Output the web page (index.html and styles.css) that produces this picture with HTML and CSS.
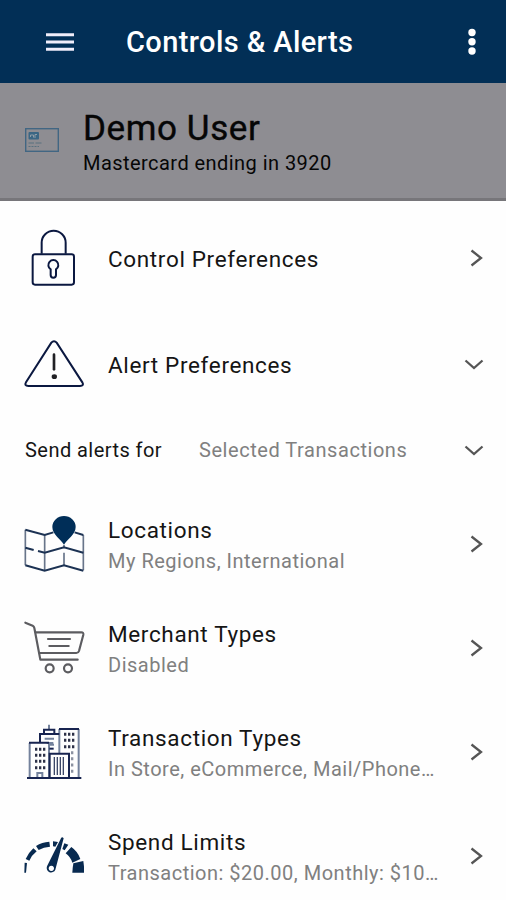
FILE: index.html
```
<!DOCTYPE html>
<html lang="en">
<head>
  <meta charset="utf-8">
  <title>Controls &amp; Alerts</title>
  <link rel="stylesheet" href="styles.css">
</head>
<body>

  <header class="topbar">
    <svg class="menu-icon" viewBox="0 0 28 18">
      <path d="M0 1.7h28M0 9h28M0 16.3h28"/>
    </svg>
    <h1>Controls &amp; Alerts</h1>
    <svg class="more-icon" viewBox="0 0 8 28">
      <circle cx="4" cy="4.5" r="3.7"/>
      <circle cx="4" cy="13.7" r="3.7"/>
      <circle cx="4" cy="23" r="3.7"/>
    </svg>
  </header>

  <section class="card-bar">
    <svg class="card-icon" viewBox="0 0 34 24">
      <rect class="card-edge" x=".7" y=".7" width="32.6" height="22.6"/>
      <rect class="card-chip" x="3.5" y="4" width="10.5" height="7.5" rx="1"/>
      <path class="card-mark" d="M5.5 9V7h3v2.500M10 10V6.500h2"/>
      <path class="card-lines" d="M3.500 15h5.500m1.500 0h6M3.500 18.500h2m1 0h2m1 0h2m1 0h1.500"/>
    </svg>
    <div>
      <h2>Demo User</h2>
      <p class="card-number">Mastercard ending in 3920</p>
    </div>
  </section>

  <main>
    <div class="row row-first">
      <svg class="icon lock" viewBox="36 33 192 192">
        <path d="M95 116V83a36 36 0 0 1 72 0v33"/>
        <rect x="68" y="118" width="124" height="91" rx="7"/>
        <path d="M122 163a15 15 0 1 1 16 0v17a8 8 0 0 1-16 0z"/>
      </svg>
      <div class="text"><p class="title">Control Preferences</p></div>
      <svg class="arrow" viewBox="0 0 20 20"><path d="M5.500 2.500 15 10l-9.500 7.500"/></svg>
    </div>

    <div class="row row-alerts">
      <svg class="icon alert" viewBox="36 21 192 192">
        <path d="M124 53q8-9 16 0l77 119q6 11-7 11H55q-13 0-7-11z"/>
        <path class="bang" d="M132 89v44"/>
        <ellipse class="dot" cx="133" cy="155" rx="8" ry="7"/>
      </svg>
      <div class="text"><p class="title">Alert Preferences</p></div>
      <svg class="arrow down" viewBox="0 0 20 20"><path d="M1.500 6.500 10 14l8.500-7.500"/></svg>
    </div>

    <div class="row row-send">
      <label class="send-label">Send alerts for</label>
      <span class="send-value">Selected Transactions</span>
      <svg class="arrow down" viewBox="0 0 20 20"><path d="M1.500 6.500 10 14l8.500-7.500"/></svg>
    </div>

    <div class="row">
      <svg class="icon map" viewBox="36 21 192 192">
        <path class="fold" d="M46 74v107M104 90v106M220 90v106M162 120v10M162 143v37"/>
        <path class="fold-edge" d="M46 74l58 16 26-8M194 82l26 8M46 181l58 16 58-16 58 16"/>
        <path class="route" d="M46 128l25 7M84 138l20 5 58-16 58 16"/>
        <path class="pin" d="M162 119c-9-15-35-31-35-53a35 33 0 0 1 70 0c0 22-26 38-35 53z"/>
      </svg>
      <div class="text">
        <p class="title">Locations</p>
        <p class="detail">My Regions, International</p>
      </div>
      <svg class="arrow" viewBox="0 0 20 20"><path d="M5.500 2.500 15 10l-9.500 7.500"/></svg>
    </div>

    <div class="row">
      <svg class="icon cart" viewBox="36 18 192 192">
        <path d="M46 38l22 9q4 2 5 7l18 95h112"/>
        <path d="M77 67h137q7 0 6 7l-13 49q-2 6-8 6H89"/>
        <path d="M114 87h66M118 108h58"/>
        <circle cx="119" cy="175" r="12"/>
        <circle cx="174" cy="175" r="12"/>
      </svg>
      <div class="text">
        <p class="title">Merchant Types</p>
        <p class="detail">Disabled</p>
      </div>
      <svg class="arrow" viewBox="0 0 20 20"><path d="M5.500 2.500 15 10l-9.500 7.500"/></svg>
    </div>

    <div class="row">
      <svg class="icon city" viewBox="36 15 192 192">
        <path class="wall" d="M59 84v103M117 84v103M148 42v72M206 42v145"/>
        <path class="wall" d="M117 29v14M104 71h28M110 84h20M118 89h14M82 187v-13h15v13"/>
        <path class="roof" d="M51 189h163M57 83h60M90 83V57h58M102 56V44h31v12M147 42h60M119 187v-71h58v71"/>
        <path class="roof" d="M118 101h13"/>
        <path class="slats" d="M133 126v54M142 126v54M151 126v54M160 126v54"/>
        <path class="windows" d="M75 103h31M75 121h31M75 139h31M75 158h31"/>
        <path class="windows" d="M162 58h31M162 76h31M162 95h31"/>
        <path class="windows side" d="M183 113h8M183 131h8M183 150h8M183 169h8"/>
      </svg>
      <div class="text">
        <p class="title">Transaction Types</p>
        <p class="detail">In Store, eCommerce, Mail/Phone…</p>
      </div>
      <svg class="arrow" viewBox="0 0 20 20"><path d="M5.500 2.500 15 10l-9.500 7.500"/></svg>
    </div>

    <div class="row">
      <svg class="icon gauge" viewBox="36 12 192 192">
        <path d="M43 158l1-30 7 1-3 29z"/>
        <path d="M47 117q7-17 23-32l10 9q-15 12-22 28z"/>
        <path d="M78 78q18-12 40-13l2 15q-19 1-34 10z"/>
        <path d="M129 64l15 2-8 14-7-1zM163 70l12 4-11 17-7-4z"/>
        <path d="M184 81q20 14 27 36l-24 11q-5-17-20-28z"/>
        <path d="M190 130l30-7q3 14 2 35h-35q1-15 3-28z"/>
        <path fill-rule="evenodd" d="M153 55q3-7 8 0l-25 94a13 13 0 1 1-25-10zM124 137a8 8 0 1 0 .1 0z"/>
      </svg>
      <div class="text">
        <p class="title">Spend Limits</p>
        <p class="detail">Transaction: $20.00, Monthly: $10…</p>
      </div>
      <svg class="arrow" viewBox="0 0 20 20"><path d="M5.500 2.500 15 10l-9.500 7.500"/></svg>
    </div>
  </main>

</body>
</html>
```
FILE: styles.css
```
body {
  margin: 0;
  height: 900px;
  overflow: hidden;
  background-color: #fefefe;
  font-family: Roboto, "Liberation Sans", sans-serif;
  color: #151515;
}
h1, h2, p {
  margin: 0;
}
svg {
  display: block;
  flex: none;
  fill: none;
}

/* top bar */
.topbar {
  display: flex;
  align-items: center;
  box-sizing: border-box;
  height: 83px;
  padding: 0 30px 0 46px;
  background-color: #022f56;
  color: #fff;
}
.topbar h1 {
  flex: 1;
  margin-left: 52px;
  font-size: 29px;
  line-height: 34px;
  font-weight: 500;
  letter-spacing: 0.4px;
  padding-top: 1px;
}
.menu-icon {
  width: 28px;
  height: 18px;
  stroke: #f0edfa;
  stroke-width: 3;
}
.more-icon {
  width: 8px;
  height: 28px;
  fill: #fff;
}

/* selected card */
.card-bar {
  display: flex;
  box-sizing: border-box;
  height: 118px;
  padding: 26px 0 0 25px;
  background-color: #8e8d92;
  border-bottom: 3px solid #77767a;
  color: #060606;
}
.card-icon {
  width: 34px;
  height: 24px;
  margin: 19px 24px 0 0;
}
.card-edge {
  stroke: #416683;
  stroke-width: 1.4;
}
.card-chip {
  fill: #3a6684;
}
.card-mark {
  stroke: #8e9ca6;
}
.card-lines {
  stroke: #59707f;
}
.card-bar h2 {
  font-size: 35px;
  line-height: 40px;
  font-weight: 400;
  letter-spacing: 0.6px;
  -webkit-text-stroke: 0.4px #060606;
}
.card-number {
  font-size: 20px;
  line-height: 24px;
  margin-top: 2px;
  letter-spacing: 0.45px;
}

/* list rows */
.row {
  display: flex;
  align-items: center;
  box-sizing: border-box;
  height: 104px;
  padding: 0 20px 0 22px;
}
.row-first {
  height: 114px;
}
.row-alerts {
  height: 98px;
}
.row-send {
  height: 74px;
  margin-bottom: 5px;
  padding-left: 25px;
}
.icon {
  width: 64px;
  height: 64px;
  margin-right: 22px;
}
.text {
  width: 340px;
  margin-right: auto;
  padding-top: 1px;
}
.title {
  font-size: 22.5px;
  line-height: 28px;
  letter-spacing: 0.65px;
}
.detail {
  margin-top: 4px;
  font-size: 20px;
  line-height: 26px;
  letter-spacing: 0.5px;
  color: #808080;
  white-space: nowrap;
}
.send-label {
  width: 174px;
  font-size: 20px;
  letter-spacing: 0.45px;
}
.send-value {
  flex: 1;
  font-size: 20px;
  letter-spacing: 0.55px;
  color: #808080;
}
.arrow {
  width: 20px;
  height: 20px;
  stroke: #555;
  stroke-width: 2.3;
}
.down {
  margin-right: 2px;
}

/* icons */
.lock, .alert {
  stroke: #0b1840;
  stroke-width: 6;
}
.bang {
  stroke: #202024;
  stroke-width: 8;
  stroke-linecap: round;
}
.dot {
  fill: #202024;
  stroke: none;
}
.fold {
  stroke: #68758a;
  stroke-width: 5;
}
.fold-edge, .route {
  stroke: #1c3253;
  stroke-width: 6;
}
.pin {
  fill: #002e58;
}
.cart {
  stroke: #5c5c60;
  stroke-width: 6.5;
  stroke-linecap: round;
  stroke-linejoin: round;
}
.wall {
  stroke: #74829c;
  stroke-width: 6;
}
.roof {
  stroke: #182450;
  stroke-width: 6;
}
.slats {
  stroke: #3c4768;
  stroke-width: 4;
}
.windows {
  stroke: #2c3047;
  stroke-width: 9;
  stroke-dasharray: 7 5;
}
.side {
  stroke: #8b91a0;
}
.gauge {
  fill: #082a50;
}
```
